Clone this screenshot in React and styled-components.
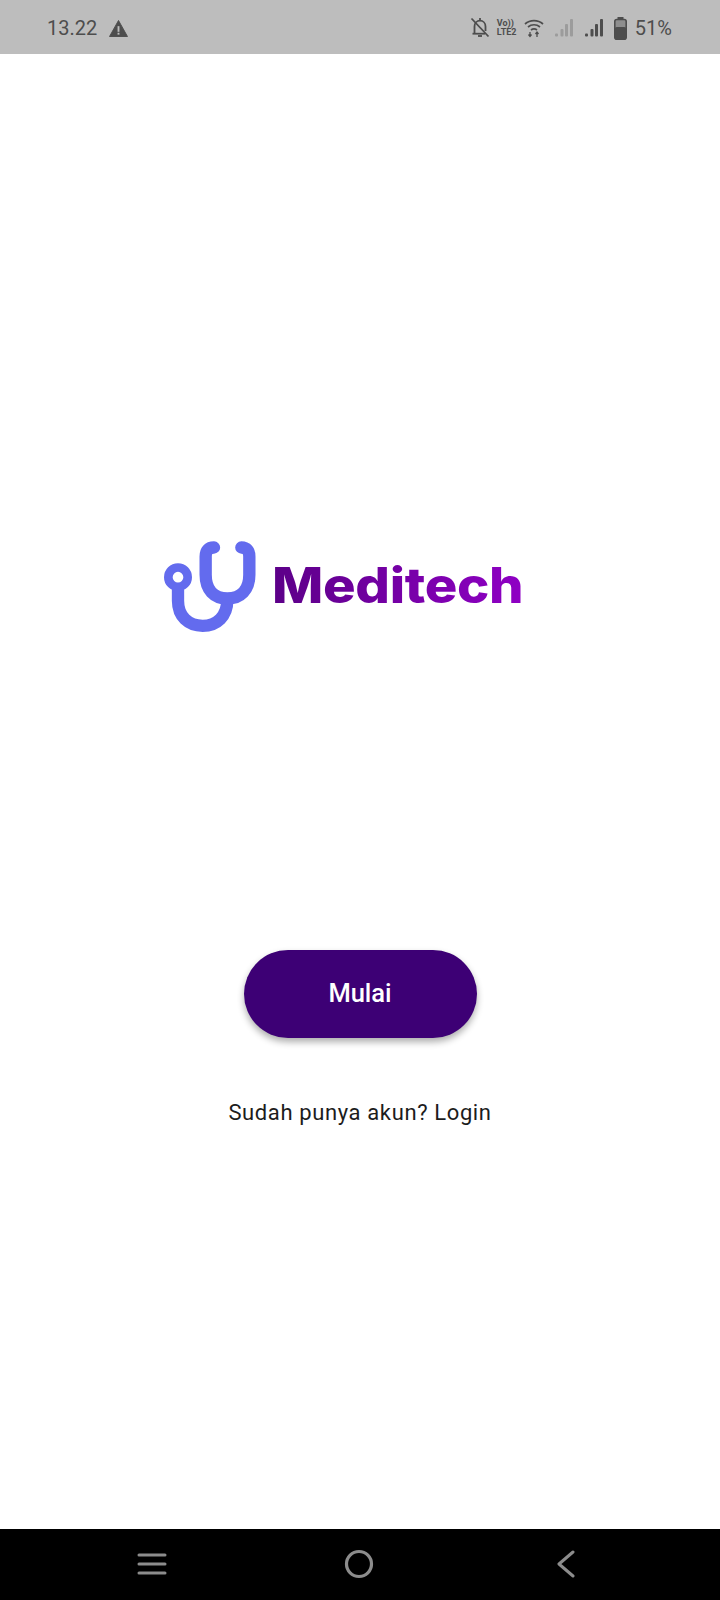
import React from 'react';
import styled, { createGlobalStyle } from 'styled-components';

const GlobalStyle = createGlobalStyle`
    html, body {
        margin: 0;
        padding: 0;
        background: #fff;
    }
`;

const Screen = styled.div`
    width: 720px;
    height: 1600px;
    display: flex;
    flex-direction: column;
    font-family: 'Roboto', sans-serif;
    overflow: hidden;
`;

const StatusBar = styled.div`
    height: 54px;
    flex-shrink: 0;
    background: #bdbdbd;
    color: #4d4d4d;
    display: flex;
    align-items: center;
    justify-content: space-between;
    padding: 2px 48px 0 47px;
    box-sizing: border-box;
    font-size: 20px;
`;

const StatusGroup = styled.div`
    display: flex;
    align-items: center;
    gap: ${({ gap }) => gap || 0}px;
`;

const Content = styled.main`
    flex: 1;
    display: flex;
    flex-direction: column;
    align-items: center;
    padding-top: 484px;
`;

const Logo = styled.div`
    align-self: flex-start;
    margin-left: 160px;
    display: flex;
    align-items: center;
    gap: 12px;
    height: 97px;
`;

const LogoText = styled.span`
    font-family: 'Inter', sans-serif;
    font-weight: 800;
    font-size: 49px;
    letter-spacing: -0.3px;
    line-height: 1;
    background: linear-gradient(90deg, #5c0088 0%, #8f00c4 100%);
    -webkit-background-clip: text;
    background-clip: text;
    color: transparent;
    margin-top: -3px;
    transform: scaleX(1.11);
    transform-origin: left center;
`;

const StartButton = styled.button`
    width: 233px;
    height: 88px;
    margin-top: 315px;
    padding: 0 0 2px;
    border: none;
    border-radius: 44px;
    background: #3d0075;
    color: #fff;
    font-family: 'Roboto', sans-serif;
    font-weight: 500;
    font-size: 25.5px;
    box-shadow: 0 4px 7px rgba(0, 0, 0, 0.32);
`;

const LoginText = styled.p`
    margin: 60px 0 0;
    color: #1c1c1c;
    font-size: 22px;
    line-height: 30px;
    letter-spacing: 0.62px;
`;

const NavBar = styled.nav`
    height: 71px;
    flex-shrink: 0;
    background: #000;
    display: grid;
    grid-template-columns: repeat(3, 1fr);
    padding: 0 50px 2px 48px;
    box-sizing: border-box;
    align-items: center;
    justify-items: center;
`;

const NetLabel = styled.div`
    font-size: 9px;
    line-height: 9px;
    font-weight: 700;
    color: #4d4d4d;
    width: 24px;
    margin-left: 4px;
`;

function Stethoscope() {
    return (
        <svg width="100" height="97" viewBox="30 40 300 290" fill="none" stroke="#636bee" strokeWidth="37" strokeLinecap="round">
            <circle cx="84" cy="157" r="29" strokeWidth="26" />
            <path d="M84 195 V228 C84 275 115 303 158 303 C200 303 232 275 232 225" />
            <path d="M192 68 C175 68 167 78 167 95 V150 C167 195 192 221 232 221 C272 221 298 195 298 150 V95 C298 78 290 68 274 68" />
        </svg>
    );
}

function WarningIcon() {
    return (
        <svg width="19" height="17" viewBox="0 0 20 18">
            <path d="M10 0.5 L19.5 17.5 H0.5 Z" fill="#4d4d4d" stroke="#4d4d4d" strokeLinejoin="round" />
            <rect x="9" y="6.5" width="2" height="6" fill="#bdbdbd" />
            <rect x="9" y="13.5" width="2" height="2" fill="#bdbdbd" />
        </svg>
    );
}

function MutedBell() {
    return (
        <svg width="20" height="22" viewBox="0 0 20 22" fill="none" stroke="#4d4d4d" strokeWidth="1.8">
            <path d="M4.5 16 V9.5 C4.5 6 7 3.7 10 3.7 C13 3.7 15.5 6 15.5 9.5 V14" />
            <path d="M2.5 16.7 H15" />
            <path d="M10 1 V3.5" />
            <path d="M8 19 H12" />
            <path d="M1.5 1.5 L18.5 19.5" />
        </svg>
    );
}

function WifiIcon() {
    return (
        <svg width="20" height="20" viewBox="0 0 20 20" fill="none" stroke="#4d4d4d" strokeWidth="1.7">
            <path d="M1 6 C6 1.5 14 1.5 19 6" />
            <path d="M4 9 C7.5 6 12.5 6 16 9" />
            <path d="M7 12 C8.8 10.6 11.2 10.6 13 12" />
            <path d="M6 14 V18 M4.500 16.500 L6 18.500 L7.500 16.500" strokeWidth="1.3" />
            <path d="M13 19 V14.500 M11.500 16 L13 14 L14.500 16" strokeWidth="1.3" />
        </svg>
    );
}

function SignalIcon({ color }) {
    return (
        <svg width="20" height="20" viewBox="0 0 20 20" fill={color}>
            <rect x="1" y="15.500" width="3" height="3" rx="1" />
            <rect x="6.500" y="11" width="3" height="7.500" rx="1" />
            <rect x="11" y="6" width="3" height="12.500" rx="1" />
            <rect x="16" y="1" width="3" height="17.500" rx="1" />
        </svg>
    );
}

function BatteryIcon() {
    return (
        <svg width="13" height="23" viewBox="0 0 13 23">
            <rect x="3.500" y="0" width="6" height="3" fill="#4d4d4d" />
            <rect x="0.800" y="2.500" width="11.400" height="19.700" rx="2" fill="#8e8e8e" stroke="#4d4d4d" strokeWidth="1.600" />
            <rect x="0.800" y="10" width="11.400" height="12.200" rx="2" fill="#4d4d4d" />
        </svg>
    );
}

const MenuIcon = () => (
    <svg width="30" height="22" viewBox="0 0 30 22" stroke="#8c8c8c" strokeWidth="3" strokeLinecap="round">
        <path d="M2 2 H28 M2 11 H28 M2 20 H28" />
    </svg>
);

const HomeIcon = () => (
    <svg width="30" height="30" viewBox="0 0 30 30" fill="none" stroke="#8c8c8c" strokeWidth="3.200">
        <circle cx="15" cy="15" r="12.500" />
    </svg>
);

const BackIcon = () => (
    <svg width="20" height="28" viewBox="0 0 20 28" fill="none" stroke="#8c8c8c" strokeWidth="3" strokeLinecap="round" strokeLinejoin="round">
        <path d="M17 2 L3 14 L17 26" />
    </svg>
);

export default function App() {
    return (
        <Screen>
            <GlobalStyle />
            <StatusBar>
                <StatusGroup gap={12}>
                    <span>13.22</span>
                    <WarningIcon />
                </StatusGroup>
                <StatusGroup gap={8}>
                    <StatusGroup gap={10}>
                        <StatusGroup gap={3}>
                            <MutedBell />
                            <NetLabel>Vo))<br />LTE2</NetLabel>
                            <WifiIcon />
                        </StatusGroup>
                        <SignalIcon color="#9c9c9c" />
                        <SignalIcon color="#4d4d4d" />
                        <BatteryIcon />
                    </StatusGroup>
                    <span>51%</span>
                </StatusGroup>
            </StatusBar>
            <Content>
                <Logo>
                    <Stethoscope />
                    <LogoText>Meditech</LogoText>
                </Logo>
                <StartButton>Mulai</StartButton>
                <LoginText>Sudah punya akun? Login</LoginText>
            </Content>
            <NavBar>
                <MenuIcon />
                <HomeIcon />
                <BackIcon />
            </NavBar>
        </Screen>
    );
}
